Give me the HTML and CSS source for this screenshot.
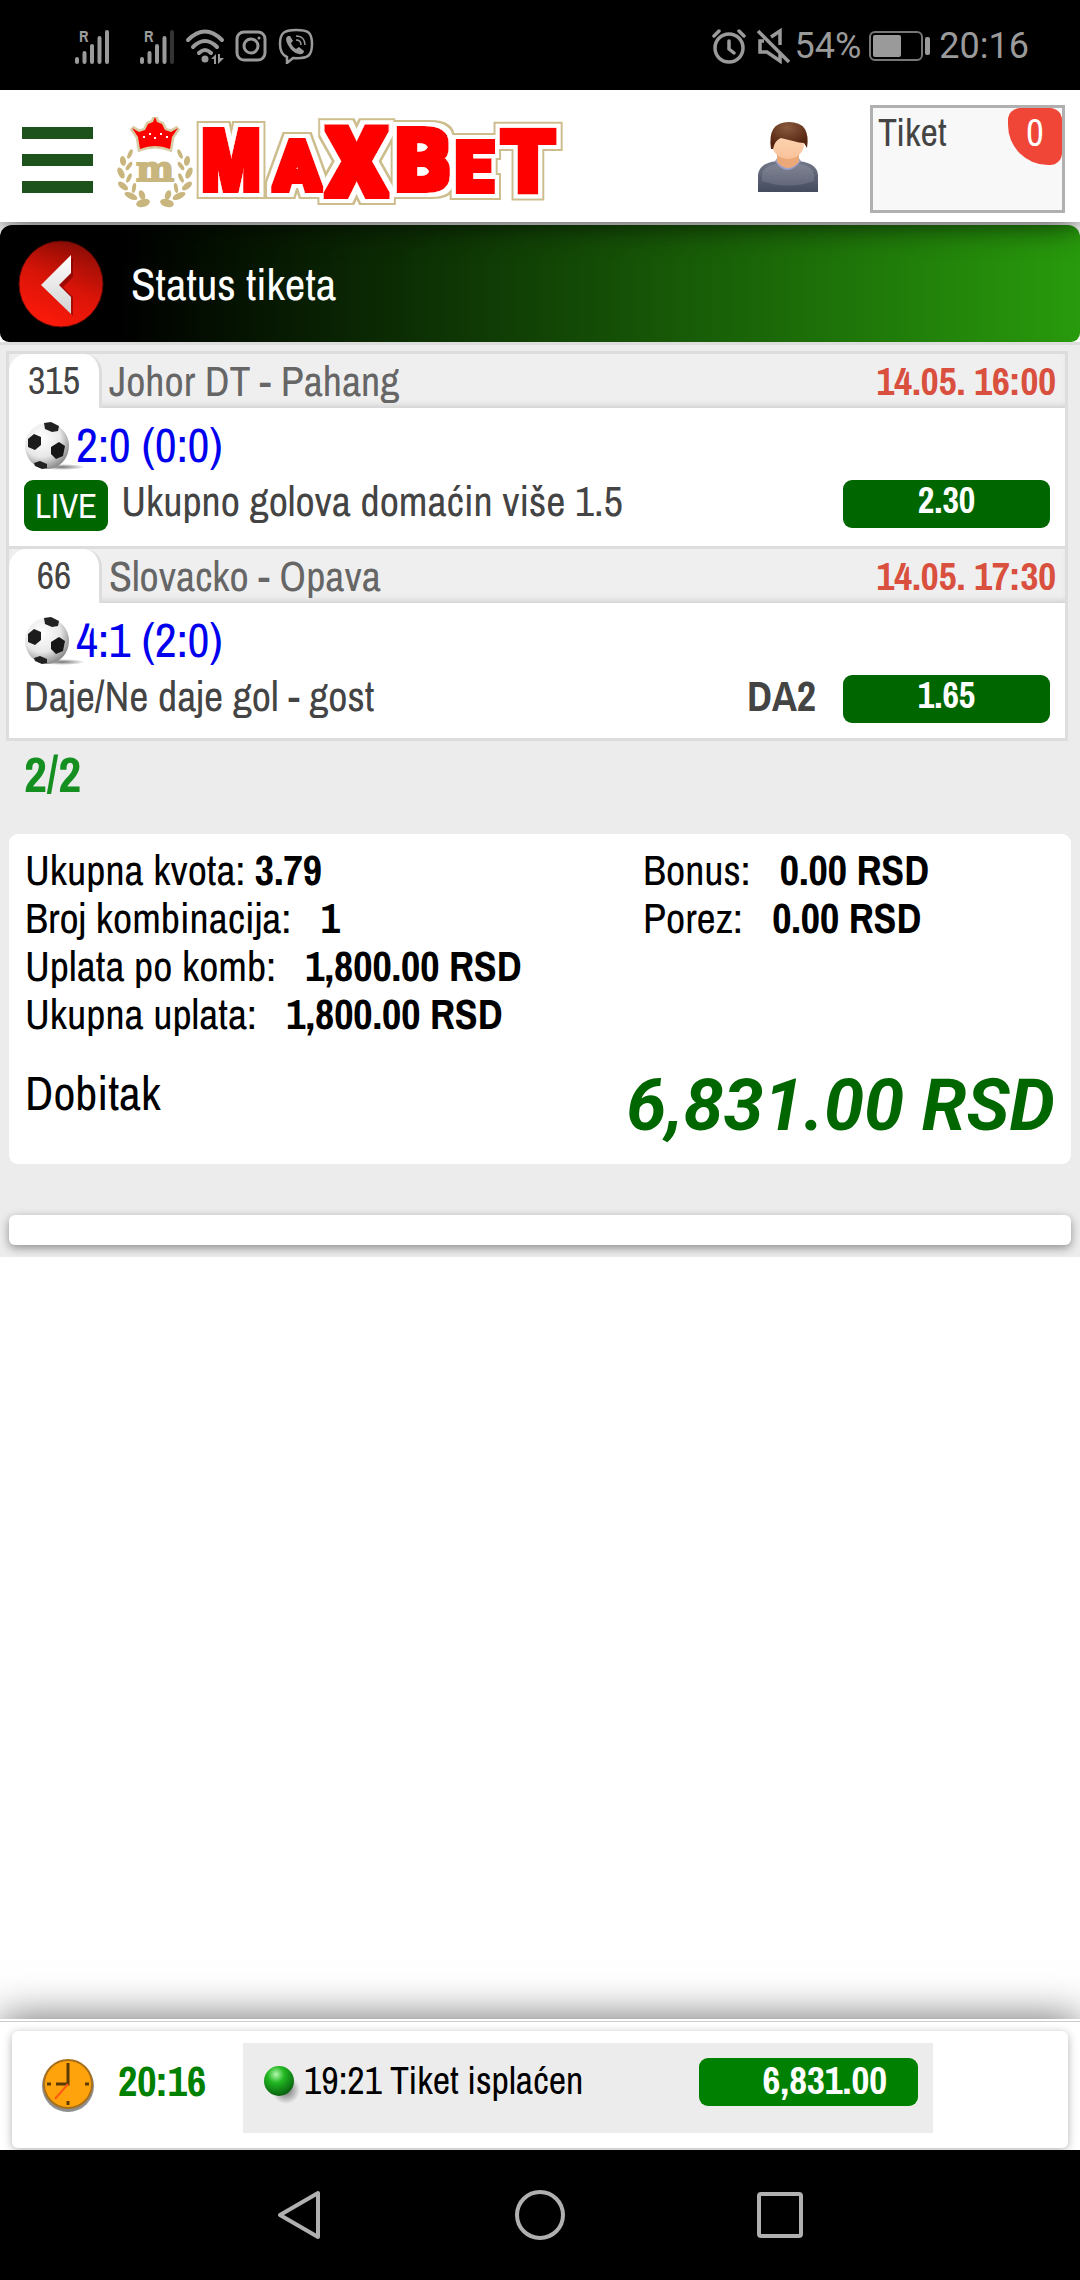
FILE: index.html
```html
<!DOCTYPE html>
<html lang="sr-Latn">
<head>
<meta charset="utf-8">
<meta name="viewport" content="width=device-width, initial-scale=1">
<title>Status tiketa</title>
<link rel="stylesheet" href="styles.css">
</head>
<body>
<svg class="defs" aria-hidden="true">
  <defs>
    <radialGradient id="ballShade" cx="38%" cy="32%" r="70%">
      <stop offset="0" stop-color="#fff"/><stop offset=".6" stop-color="#e8e8e8"/><stop offset="1" stop-color="#8c8c8c"/>
    </radialGradient>
    <radialGradient id="ballFloor">
      <stop offset="0" stop-color="#000" stop-opacity=".55"/><stop offset="1" stop-color="#000" stop-opacity="0"/>
    </radialGradient>
    <filter id="logoOutline" x="-10%" y="-30%" width="120%" height="160%">
      <feMorphology in="SourceGraphic" operator="dilate" radius="3" result="fat"/>
      <feMorphology in="fat" operator="dilate" radius="4" result="inner"/>
      <feMorphology in="fat" operator="dilate" radius="6" result="outer"/>
      <feFlood flood-color="#fff"/><feComposite in2="inner" operator="in" result="white"/>
      <feFlood flood-color="#cdbd8c"/><feComposite in2="outer" operator="in" result="tan"/>
      <feMerge><feMergeNode in="tan"/><feMergeNode in="white"/><feMergeNode in="fat"/></feMerge>
    </filter>
    <symbol id="ball" viewBox="0 0 62 48">
      <ellipse cx="38" cy="45" rx="23" ry="3" fill="url(#ballFloor)"/>
      <ellipse cx="23" cy="24" rx="22" ry="23" fill="url(#ballShade)"/>
      <path d="M20 1l7-1 8 4-1 5-6 1-7-3z" fill="#222"/>
      <path d="M4 17l6-5 7 3 0 8-6 5-7-3z" fill="#1c1c1c"/>
      <path d="M27 25l8-5 6 4-2 10-7 3-5-5z" fill="#161616"/>
      <path d="M10 41l6-2 7 3 0 4-5 1-7-3z" fill="#222"/>
    </symbol>
    <symbol id="signal" viewBox="0 0 38 36">
      <path d="M3 34v-3M10.500 34V25M18 34V18M25.500 34V10" stroke="#9a9a9a" stroke-width="4" stroke-linecap="round"/>
    </symbol>
  </defs>
</svg>

<div class="statusbar">
  <div class="status-left">
    <div class="signal">
      <svg width="38" height="36"><use href="#signal"/><path d="M33 34V4" stroke="#9a9a9a" stroke-width="4" stroke-linecap="round"/></svg>
      <span class="roaming">R</span>
    </div>
    <div class="signal">
      <svg width="38" height="36"><use href="#signal"/><path d="M33 34V4" stroke="#333" stroke-width="4" stroke-linecap="round"/></svg>
      <span class="roaming">R</span>
    </div>
    <svg class="wifi" width="42" height="36" viewBox="0 0 42 36" fill="none" stroke="#9a9a9a" stroke-width="4" stroke-linecap="round">
      <path d="M3 12Q20-5 37 12M8 19Q20 7 32 19M14 25Q20 19 26 25"/>
      <circle cx="20" cy="31" r="3.500" fill="#9a9a9a" stroke="none"/>
      <path d="M26 31l5-5v10h-2v-5zM33 26h2v4h4l-6 6z" fill="#9a9a9a" stroke="none"/>
    </svg>
    <svg class="insta" width="32" height="32" viewBox="0 0 32 32" fill="none" stroke="#9a9a9a" stroke-width="3">
      <rect x="2" y="2" width="28" height="28" rx="7"/><circle cx="16" cy="16" r="7"/><circle cx="24" cy="8" r="1.500" fill="#9a9a9a" stroke="none"/>
    </svg>
    <svg width="36" height="36" viewBox="0 0 36 36" fill="none" stroke="#9a9a9a" stroke-width="2.500">
      <path d="M18 2c-12 0-16 3-16 14 0 7 2 11 7 13v6l6-5c15 1 19-2 19-14S30 2 18 2z"/>
      <path d="M10 8c-3 2-2 5 0 9 3 5 6 8 11 9 3 1 5-1 5-3l-5-4-3 2c-2-1-4-3-5-6l2-2-3-5z" fill="#9a9a9a" stroke="none"/>
      <path d="M18 8c6 0 9 4 9 9M18 12c3 0 5 2 5 5" stroke-width="1.500"/>
    </svg>
  </div>
  <div class="status-right">
    <svg width="34" height="36" viewBox="0 0 34 36" fill="none" stroke="#9a9a9a" stroke-width="3.500" stroke-linecap="round">
      <circle cx="17" cy="20" r="14"/><path d="M17 13v8l5 4M2 8l5-5M32 8l-5-5"/>
    </svg>
    <svg class="mute" width="34" height="36" viewBox="0 0 34 36" fill="none" stroke="#9a9a9a" stroke-width="3.500">
      <path d="M2 3l31 31M8 13H4v11h7l13 9V26M15 9l9-6v14"/>
    </svg>
    <span>54%</span>
    <svg class="battery" width="62" height="30" viewBox="0 0 62 30">
      <rect x="1" y="1" width="52" height="28" rx="5" fill="none" stroke="#777" stroke-width="2"/>
      <rect x="4" y="4" width="28" height="22" rx="2" fill="#9a9a9a"/><rect x="56" y="6" width="5" height="18" rx="2" fill="#9a9a9a"/>
    </svg>
    <span>20:16</span>
  </div>
</div>

<header class="header">
  <button class="menu" aria-label="Meni"><i></i><i></i><i></i></button>
  <a class="brand" href="#" aria-label="MaxBet">
    <svg width="460" height="96" viewBox="0 0 460 96">
      <g id="leaves" fill="#c9b67f">
        <ellipse cx="13" cy="37" rx="2" ry="5" transform="rotate(25 13 37)"/>
        <ellipse cx="6" cy="44" rx="3" ry="5" transform="rotate(-10 6 44)"/>
        <ellipse cx="12" cy="49" rx="2" ry="5" transform="rotate(35 12 49)"/>
        <ellipse cx="4" cy="56" rx="3" ry="6" transform="rotate(-25 4 56)"/>
        <ellipse cx="12" cy="61" rx="2" ry="5" transform="rotate(25 12 61)"/>
        <ellipse cx="6" cy="69" rx="3" ry="6" transform="rotate(-50 6 69)"/>
        <ellipse cx="17" cy="71" rx="2" ry="5" transform="rotate(10 17 71)"/>
        <ellipse cx="14" cy="79" rx="3" ry="7" transform="rotate(-65 14 79)"/>
        <ellipse cx="25" cy="78" rx="3" ry="5" transform="rotate(-20 25 78)"/>
        <ellipse cx="26" cy="86" rx="4" ry="7" transform="rotate(-105 26 86)"/>
      </g>
      <use href="#leaves" transform="translate(76 0) scale(-1 1)"/>
      <path d="M15 11l7 4 6-2 3-6 5-2 2-5 2 5 5 2 3 6 6 2 7-4-6 9-2 12q-15-6-30 0l-2-12z" fill="#f00" stroke="#d9cda6" stroke-width="5" paint-order="stroke"/>
      <path d="M26 20h2M32 17h2M37 21h2M43 17h2M49 20h2" stroke="#fff" stroke-width="2"/>
      <text class="crest" x="38" y="64" text-anchor="middle">m</text>
      <g class="wordmark" filter="url(#logoOutline)">
        <text class="letter-m" x="84" y="73">M</text>
        <text class="letter-s" x="157" y="73">A</text>
        <text class="letter-x" x="209" y="79">X</text>
        <text class="letter-l" x="278" y="73">B</text>
        <text class="letter-s" x="338" y="74">E</text>
        <text class="letter-l" x="384" y="74">T</text>
      </g>
    </svg>
  </a>
  <a class="user" href="#" aria-label="Korisnik">
    <svg width="62" height="72" viewBox="0 0 62 72">
      <defs>
        <linearGradient id="shirt" x2="0" y2="1"><stop offset="0" stop-color="#737789"/><stop offset="1" stop-color="#444a5f"/></linearGradient>
        <linearGradient id="skin" x2="0" y2="1"><stop offset="0" stop-color="#ffd9b8"/><stop offset="1" stop-color="#f8c29a"/></linearGradient>
        <radialGradient id="hair" cx="45%" cy="20%" r="70%"><stop offset="0" stop-color="#8a5a3e"/><stop offset="1" stop-color="#54230f"/></radialGradient>
      </defs>
      <path d="M1 71V54Q2 42 20 40h22q18 2 19 14v17z" fill="url(#shirt)"/>
      <path d="M5 54q1-9 14-11h24q13 2 14 11v6q-26 9-52 0z" fill="#fff" opacity=".12"/>
      <path d="M18 40q12 18 26 0l-3-4H21z" fill="#9a9fce"/>
      <path d="M20 32h22v9q-11 12-22 0z" fill="#eba878"/>
      <ellipse cx="31" cy="23" rx="16" ry="15" fill="url(#skin)"/>
      <path d="M14 28Q10 1 32 1t18 26l-3-5q-5 0-11-2l-12-3q-6 2-8 11z" fill="url(#hair)"/>
    </svg>
  </a>
  <button class="slip"><span class="slip-label">Tiket</span><span class="slip-count">0</span></button>
</header>

<main class="content">
  <div class="titlebar">
    <button class="back" aria-label="Nazad">
      <svg width="86" height="88" viewBox="0 0 86 88">
        <defs>
          <linearGradient id="red" x1=".7" y1="0" x2=".3" y2="1"><stop offset="0" stop-color="#8d0d06"/><stop offset=".5" stop-color="#d91408"/><stop offset="1" stop-color="#ff1a0a"/></linearGradient>
          <linearGradient id="steel" x2="0" y2="1"><stop offset="0" stop-color="#fff"/><stop offset="1" stop-color="#d2d2d2"/></linearGradient>
        </defs>
        <ellipse cx="43" cy="44" rx="42" ry="43" fill="url(#red)" stroke="#5c0a05"/>
        <path d="M55 18v19l-10 10 10 10v19L26 46z" fill="#600" opacity=".5"/>
        <path d="M53 15v18L41 45l12 12v17L23 45z" fill="url(#steel)"/>
      </svg>
    </button>
    <h1>Status tiketa</h1>
  </div>

  <div class="ticket">
    <section class="match">
      <div class="match-head"><span class="code">315</span><span class="teams">Johor DT - Pahang</span><time>14.05. 16:00</time></div>
      <div class="match-body">
        <div class="score"><svg width="62" height="48"><use href="#ball"/></svg>2:0 (0:0)</div>
        <div class="pick"><span class="live">LIVE</span><span class="game">Ukupno golova domaćin više 1.5</span><span class="odds">2.30</span></div>
      </div>
    </section>
    <section class="match">
      <div class="match-head"><span class="code">66</span><span class="teams">Slovacko - Opava</span><time>14.05. 17:30</time></div>
      <div class="match-body">
        <div class="score"><svg width="62" height="48"><use href="#ball"/></svg>4:1 (2:0)</div>
        <div class="pick"><span class="game">Daje/Ne daje gol - gost</span><b class="tip">DA2</b><span class="odds">1.65</span></div>
      </div>
    </section>
    <p class="hits">2/2</p>

    <section class="summary">
      <div class="figures">
        <div>
          <p class="tight">Ukupna kvota: <b>3.79</b></p>
          <p>Broj kombinacija: <b>1</b></p>
          <p>Uplata po komb: <b>1,800.00 RSD</b></p>
          <p>Ukupna uplata: <b>1,800.00 RSD</b></p>
        </div>
        <div>
          <p>Bonus: <b>0.00 RSD</b></p>
          <p>Porez: <b>0.00 RSD</b></p>
        </div>
      </div>
      <div class="payout"><span>Dobitak</span><strong>6,831.00 RSD</strong></div>
    </section>
    <div class="blank"></div>
  </div>
</main>

<footer class="footer">
  <div class="footer-card">
    <div class="clock">
      <svg width="54" height="54" viewBox="0 0 54 54">
        <circle cx="27" cy="28" r="26" fill="#8f8f8f"/><circle cx="27" cy="26" r="24" fill="#ffa30d" stroke="#a8701a" stroke-width="2"/>
        <path d="M27 5v21H15M27 47v-4M6 26h4M44 26h4" fill="none" stroke="#5c3a08" stroke-width="3"/><path d="M27 26L14 41" stroke="#ff5a12" stroke-width="2"/>
      </svg>
      <time>20:16</time>
    </div>
    <div class="event">
      <svg width="38" height="42" viewBox="0 0 38 42">
        <defs><radialGradient id="dot" cx="40%" cy="28%" r="70%"><stop offset="0" stop-color="#b4f7ae"/><stop offset=".4" stop-color="#22b822"/><stop offset="1" stop-color="#0a6410"/></radialGradient></defs>
        <ellipse cx="22" cy="26" rx="14" ry="14" fill="url(#ballFloor)"/><circle cx="15" cy="17" r="15" fill="url(#dot)"/>
      </svg>
      <span>19:21 Tiket isplaćen</span>
      <b class="paid">6,831.00</b>
    </div>
  </div>
</footer>

<nav class="sysnav">
  <button aria-label="Nazad"><svg width="52" height="52" viewBox="0 0 52 52"><path d="M44 4v44L6 26z"/></svg></button>
  <button aria-label="Početak"><svg width="52" height="52" viewBox="0 0 52 52"><circle cx="26" cy="26" r="23"/></svg></button>
  <button aria-label="Pregled"><svg width="52" height="52" viewBox="0 0 52 52"><rect x="5" y="5" width="42" height="42" rx="2"/></svg></button>
</nav>
</body>
</html>
```
FILE: styles.css
```css
* { box-sizing: border-box; }

body {
  margin: 0;
  min-height: 100vh;
  display: flex;
  flex-direction: column;
  background: #fff;
  color: #000;
  font-family: "Archivo Narrow", "Arial Narrow", "Liberation Sans", sans-serif;
  font-size: 42px;
}

p, h1 { margin: 0; font-weight: normal; }
svg { display: block; flex: none; }
button { margin: 0; padding: 0; border: 0; background: none; font: inherit; color: inherit; }
a { color: inherit; text-decoration: none; }
.defs { position: absolute; width: 0; height: 0; }

/* Phone status bar */
.statusbar {
  display: flex;
  justify-content: space-between;
  align-items: center;
  height: 90px;
  padding: 2px 51px 0 74px;
  background: #000;
  color: #9a9a9a;
  font: 36px/44px Roboto, sans-serif;
}
.status-left, .status-right { display: flex; align-items: center; }
.signal { position: relative; margin-right: 27px; }
.signal + .signal { margin-right: 8px; }
.roaming { position: absolute; left: 5px; top: 0; font: bold 16px/16px "Archivo Narrow", sans-serif; }
.wifi { margin-right: 8px; }
.insta { margin-right: 11px; }
.mute { margin: 0 5px 0 10px; }
.battery { margin: 0 8px; }

/* Site header */
.header {
  position: relative;
  z-index: 1;
  display: flex;
  align-items: flex-start;
  height: 132px;
  padding: 15px 15px 0 22px;
  background: #fff;
  box-shadow: 0 0 30px rgba(0, 0, 0, .9);
  clip-path: inset(0 0 -40px 0);
}
.menu { display: flex; flex-direction: column; gap: 15px; padding-top: 22px; }
.menu i { width: 71px; height: 12px; background: #1d521c; }
.brand { margin: 12px 0 0 24px; }
.crest { font: bold 36px "DejaVu Serif", serif; fill: #c9b67f; stroke: #c9b67f; stroke-width: 2px; }
.wordmark { font-family: Roboto, sans-serif; font-weight: 900; fill: #f00; }
.letter-m { font-family: "Archivo Narrow", sans-serif; font-weight: 700; font-size: 88px; }
.letter-s { font-size: 68px; }
.letter-l { font-size: 86px; }
.letter-x { font-size: 96px; }
.user { margin: 16px 51px 0 auto; }
.slip {
  display: flex;
  justify-content: space-between;
  align-items: flex-start;
  width: 195px;
  height: 108px;
  border: 3px solid #b0b0b0;
  background: #f8f8f8;
  font-size: 38px;
  line-height: 50px;
}
.slip-label { padding-left: 5px; color: #444; }
.slip-count {
  width: 54px;
  height: 57px;
  border-radius: 12px 12px 12px 40px;
  background: #f04638;
  color: #fff;
  text-align: center;
}

/* Ticket page */
.content { flex: 1; padding-top: 3px; }
.titlebar {
  display: flex;
  align-items: center;
  gap: 27px;
  height: 117px;
  padding: 0 18px;
  border-radius: 12px 12px 9px 9px;
  background: linear-gradient(to right, #000 11%, #289a0c);
}
.titlebar h1 { color: #fff; font-size: 45px; line-height: 54px; }

.ticket {
  padding: 6px 9px 12px;
  background: #ececec;
  border-top: 3px solid #ddd;
}
.match {
  margin: 0 3px 0 -3px;
  border: 3px solid #ddd;
  background: #fff;
}
.match + .match { border-top: 0; }
.match-head {
  display: grid;
  grid-template-columns: 93px 1fr auto;
  line-height: 54px;
  background: #efefef;
  box-shadow: inset 0 -6px 6px -4px #ccc;
}
.code {
  border-right: 3px solid #ddd;
  border-radius: 18px 18px 0 0;
  background: #fff;
  color: #444;
  font-size: 38px;
  text-align: center;
}
.teams { padding-left: 7px; color: #666; }
.match-head time { padding-right: 9px; color: #d9503f; font-size: 39px; font-weight: bold; }
.match-body { padding: 14px 15px 15px; }
.score { display: flex; color: #00e; font-size: 48px; line-height: 46px; }
.score svg { margin-right: -10px; }
.pick { display: flex; align-items: flex-start; margin-top: 10px; color: #444; line-height: 42px; }
.live {
  margin-right: 13px;
  padding: 0 11px;
  border-radius: 9px;
  background: #060;
  color: #fff;
  font-size: 35px;
  line-height: 51px;
}
.game { flex: 1; }
.tip { margin-right: 27px; }
.odds {
  width: 207px;
  height: 48px;
  border-radius: 9px;
  background: #060;
  color: #fff;
  font-size: 36px;
  font-weight: bold;
  line-height: 40px;
  text-align: center;
}
.hits { padding-left: 15px; color: #159020; font-size: 50px; font-weight: bold; line-height: 66px; }

.summary { margin-top: 27px; padding: 12px 16px 22px; border-radius: 9px; background: #fff; }
.figures { display: grid; grid-template-columns: 618fr 412fr; line-height: 48px; }
.figures b { margin-left: 20px; }
.figures .tight b { margin-left: 0; }
.payout { display: flex; justify-content: space-between; padding-top: 32px; font-size: 48px; line-height: 46px; }
.payout strong { color: #060; font: italic bold 72px/72px Roboto, sans-serif; }
.blank { height: 30px; margin-top: 51px; border-radius: 6px; background: #fff; box-shadow: 0 3px 10px rgba(0, 0, 0, .4); }

/* Ticket status strip */
.footer {
  padding: 12px 12px 2px;
  background: linear-gradient(#fff 2px, #ccc 2px, #ccc 3px, #fff 3px);
  box-shadow: 0 0 40px rgba(0, 0, 0, .6);
}
.footer-card {
  display: grid;
  grid-template-columns: 231fr 690fr 135fr;
  padding: 12px 0 15px;
  border-radius: 6px;
  background: #fff;
  box-shadow: 0 2px 10px rgba(0, 0, 0, .3);
}
.clock { display: flex; gap: 23px; padding: 15px 0 0 29px; color: #008000; font-weight: bold; line-height: 46px; }
.event {
  display: flex;
  align-items: flex-start;
  height: 90px;
  padding: 15px 15px 0 21px;
  background: #ececec;
  font-size: 38px;
  line-height: 45px;
}
.event svg { margin: 6px 2px 0 0; }
.paid {
  width: 219px;
  height: 48px;
  margin-left: auto;
  padding-right: 31px;
  border-radius: 9px;
  background: #008000;
  color: #fff;
  font-size: 39px;
  text-align: right;
}

/* Phone navigation keys */
.sysnav { position: relative; display: flex; justify-content: center; gap: 188px; height: 130px; background: #000; }
.sysnav svg { fill: none; stroke: #b0b0b0; stroke-width: 4; stroke-linejoin: round; }
```
